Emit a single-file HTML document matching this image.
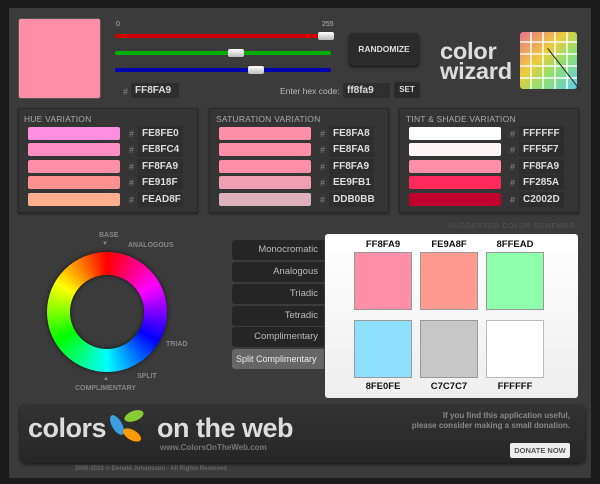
<!DOCTYPE html>
<html><head><style>
*{margin:0;padding:0;box-sizing:border-box}
body{width:600px;height:484px;background:#1c1c1c;font-family:"Liberation Sans",sans-serif;position:relative;overflow:hidden}
.a{position:absolute}
#main{left:9px;top:8px;width:582px;height:470px;background:#3b3b3c}
.hbox{background:#2e2e2f;color:#ddd;font-weight:bold;font-size:10px;line-height:15px;padding-left:4px;border-radius:1px}
.hash{color:#888;font-size:9px}
.panel{background:#353536;border:1px solid #2a2a2a;box-shadow:0 1px 2px #222}
.pt{color:#aaa;font-size:8.5px;letter-spacing:.2px}
.sw{width:92px;height:13px;border-radius:2px;margin-bottom:3.4px}
.track{height:4px;border-radius:2px}
.knob{width:16px;height:8px;background:linear-gradient(#fff,#bbb);border-radius:2px}
.btn{left:232px;width:92px;height:20px;background:#252526;color:#bbb;font-size:9.5px;text-align:right;padding-right:6px;line-height:20px;border-radius:3px 0 0 3px;white-space:nowrap}
.lab{font-size:9.5px;font-weight:bold;color:#111;text-align:center;width:60px}
.sq{width:58px;height:58px;border:1px solid #999}
.wl{color:#888;font-size:7px;font-weight:bold}
.col .r{height:16.4px;position:relative}
.col .r .hash{position:absolute;left:0;top:3px}
.col .r .hbox{position:absolute;left:9px;top:0;width:45px;height:15px}
</style></head><body>
<div id="main" class="a"></div>
<div class="a" style="left:18px;top:18px;width:83px;height:81px;background:#ff8fa9;border-radius:3px;border:1px solid #555"></div>
<div class="a" style="left:116px;top:21px;color:#bbb;font-size:7px">0</div>
<div class="a" style="left:322px;top:21px;color:#bbb;font-size:7px">255</div>
<div class="a track" style="left:115px;top:34px;width:216px;background:#d00000"></div>
<div class="a track" style="left:115px;top:51px;width:216px;background:#00b000"></div>
<div class="a track" style="left:115px;top:68px;width:216px;background:#0000b0"></div>
<div class="a knob" style="left:318px;top:32px"></div>
<div class="a knob" style="left:228px;top:49px"></div>
<div class="a knob" style="left:248px;top:66px"></div>
<div class="a hash" style="left:123px;top:87px">#</div>
<div class="a hbox" style="left:131px;top:83px;width:48px">FF8FA9</div>
<div class="a" style="left:280px;top:86px;color:#bbb;font-size:8.5px">Enter hex code:</div>
<div class="a hbox" style="left:343px;top:83px;width:47px">ff8fa9</div>
<div class="a" style="left:394px;top:82px;width:26px;height:16px;background:#2a2a2b;color:#ddd;font-size:8px;font-weight:bold;text-align:center;line-height:16px;border-radius:2px">SET</div>
<div class="a" style="left:349px;top:33px;width:70px;height:33px;background:#2b2b2c;border-radius:4px;color:#ddd;font-size:8.5px;font-weight:bold;text-align:center;line-height:33px;box-shadow:0 1px 2px #111">RANDOMIZE</div>
<div class="a" style="left:440px;top:41px;color:#ddd;font-size:23px;font-weight:bold;line-height:20px;letter-spacing:-.3px;transform:scaleX(1.03);transform-origin:0 0">color<br>wizard</div>
<div class="a" style="left:520px;top:32px;width:57px;height:57px;border-radius:3px;background:linear-gradient(135deg,rgba(255,120,150,.9),rgba(255,220,60,.9) 40%,rgba(150,240,120,.9) 65%,rgba(100,220,255,.9));"></div>
<div class="a" style="left:520px;top:32px;width:57px;height:57px;background:repeating-linear-gradient(90deg,transparent 0 10px,rgba(255,255,255,.7) 10px 12px),repeating-linear-gradient(0deg,transparent 0 10px,rgba(255,255,255,.7) 10px 12px)"></div>
<div class="a" style="width:52px;height:1px;background:#222;transform:rotate(52deg);transform-origin:0 0;left:548px;top:48px"></div>

<div class="a panel" style="left:18px;top:108px;width:180px;height:105px"></div>
<div class="a panel" style="left:209px;top:108px;width:180px;height:105px"></div>
<div class="a panel" style="left:399px;top:108px;width:180px;height:105px"></div>
<div class="a pt" style="left:24px;top:114px">HUE VARIATION</div>
<div class="a pt" style="left:216px;top:114px">SATURATION VARIATION</div>
<div class="a pt" style="left:406px;top:114px">TINT &amp; SHADE VARIATION</div>

<div class="a" style="left:28px;top:127px">
<div class="sw" style="background:#fe8fe0"></div><div class="sw" style="background:#fe8fc4"></div><div class="sw" style="background:#ff8fa9"></div><div class="sw" style="background:#fe918f"></div><div class="sw" style="background:#fead8f"></div></div>
<div class="a" style="left:219px;top:127px">
<div class="sw" style="background:#fe8fa8"></div><div class="sw" style="background:#fe8fa8"></div><div class="sw" style="background:#ff8fa9"></div><div class="sw" style="background:#ee9fb1"></div><div class="sw" style="background:#ddb0bb"></div></div>
<div class="a" style="left:409px;top:127px">
<div class="sw" style="background:#ffffff"></div><div class="sw" style="background:#fff5f7"></div><div class="sw" style="background:#ff8fa9"></div><div class="sw" style="background:#ff285a"></div><div class="sw" style="background:#c2002d"></div></div>

<div class="a col" style="left:129px;top:126px;width:56px">
<div class="r"><span class="hash">#</span><span class="hbox">FE8FE0</span></div>
<div class="r"><span class="hash">#</span><span class="hbox">FE8FC4</span></div>
<div class="r"><span class="hash">#</span><span class="hbox">FF8FA9</span></div>
<div class="r"><span class="hash">#</span><span class="hbox">FE918F</span></div>
<div class="r"><span class="hash">#</span><span class="hbox">FEAD8F</span></div></div>
<div class="a col" style="left:320px;top:126px;width:56px">
<div class="r"><span class="hash">#</span><span class="hbox">FE8FA8</span></div>
<div class="r"><span class="hash">#</span><span class="hbox">FE8FA8</span></div>
<div class="r"><span class="hash">#</span><span class="hbox">FF8FA9</span></div>
<div class="r"><span class="hash">#</span><span class="hbox">EE9FB1</span></div>
<div class="r"><span class="hash">#</span><span class="hbox">DDB0BB</span></div></div>
<div class="a col" style="left:510px;top:126px;width:56px">
<div class="r"><span class="hash">#</span><span class="hbox">FFFFFF</span></div>
<div class="r"><span class="hash">#</span><span class="hbox">FFF5F7</span></div>
<div class="r"><span class="hash">#</span><span class="hbox">FF8FA9</span></div>
<div class="r"><span class="hash">#</span><span class="hbox">FF285A</span></div>
<div class="r"><span class="hash">#</span><span class="hbox">C2002D</span></div></div>

<div class="a" style="left:448px;top:221px;color:#555;font-size:7.5px;letter-spacing:.5px">SUGGESTED COLOR SCHEMES</div>

<div class="a" style="left:47px;top:252px;width:120px;height:120px;border-radius:50%;background:conic-gradient(from 0deg,#ff0000,#ff00ff 60deg,#0000ff 120deg,#00ffff 180deg,#00ff00 240deg,#ffff00 300deg,#ff0000);box-shadow:0 0 4px #111"></div>
<div class="a" style="left:70px;top:275px;width:74px;height:74px;border-radius:50%;background:#3b3b3c;box-shadow:inset 0 0 4px #111"></div>
<div class="a wl" style="left:99px;top:232px">BASE</div>
<div class="a" style="left:102px;top:241px;color:#888;font-size:6px">▼</div>
<div class="a wl" style="left:128px;top:242px">ANALOGOUS</div>
<div class="a wl" style="left:166px;top:341px">TRIAD</div>
<div class="a wl" style="left:137px;top:373px">SPLIT</div>
<div class="a" style="left:103px;top:376px;color:#888;font-size:6px">▲</div>
<div class="a wl" style="left:75px;top:385px">COMPLIMENTARY</div>

<div class="a btn" style="top:240px">Monocromatic</div>
<div class="a btn" style="top:262px">Analogous</div>
<div class="a btn" style="top:284px">Triadic</div>
<div class="a btn" style="top:306px">Tetradic</div>
<div class="a btn" style="top:327px">Complimentary</div>
<div class="a btn" style="top:349px;background:#666;color:#eee;text-align:left;padding-left:4px;font-size:9px">Split Complimentary</div>

<div class="a" style="left:325px;top:234px;width:253px;height:164px;background:linear-gradient(#fff,#eee);border-radius:3px"></div>
<div class="a lab" style="left:353px;top:239px">FF8FA9</div>
<div class="a lab" style="left:419px;top:239px">FE9A8F</div>
<div class="a lab" style="left:485px;top:239px">8FFEAD</div>
<div class="a sq" style="left:354px;top:252px;background:#ff8fa9"></div>
<div class="a sq" style="left:420px;top:252px;background:#fe9a8f"></div>
<div class="a sq" style="left:486px;top:252px;background:#8ffead"></div>
<div class="a sq" style="left:354px;top:320px;background:#8fe0fe"></div>
<div class="a sq" style="left:420px;top:320px;background:#c7c7c7"></div>
<div class="a sq" style="left:486px;top:320px;background:#fff;border-color:#bbb"></div>
<div class="a lab" style="left:353px;top:381px">8FE0FE</div>
<div class="a lab" style="left:419px;top:381px">C7C7C7</div>
<div class="a lab" style="left:485px;top:381px">FFFFFF</div>

<div class="a" style="left:20px;top:405px;width:565px;height:58px;background:linear-gradient(#333,#262627);border-radius:6px;box-shadow:0 1px 3px #111"></div>
<div class="a" style="left:28px;top:413px;color:#ddd;font-size:27px;font-weight:bold;letter-spacing:-.5px">colors</div>
<div class="a" style="left:112px;top:414px;width:10px;height:22px;background:#3aa0e0;border-radius:50%;transform:rotate(-30deg)"></div>
<div class="a" style="left:124px;top:411px;width:20px;height:10px;background:#8c3;border-radius:50%;transform:rotate(-20deg)"></div>
<div class="a" style="left:122px;top:430px;width:20px;height:10px;background:#f90;border-radius:50%;transform:rotate(30deg)"></div>
<div class="a" style="left:157px;top:413px;color:#ddd;font-size:27px;font-weight:bold;letter-spacing:-.5px">on the web</div>
<div class="a" style="left:160px;top:443px;color:#777;font-size:8px;font-weight:bold">www.ColorsOnTheWeb.com</div>
<div class="a" style="left:380px;top:411px;width:190px;text-align:right;color:#888;font-size:8px;font-weight:bold;line-height:10px">If you find this application useful,<br>please consider making a small donation.</div>
<div class="a" style="left:510px;top:443px;width:60px;height:15px;background:#eee;color:#555;font-size:7.5px;font-weight:bold;text-align:center;line-height:15px;border-radius:2px">DONATE NOW</div>
<div class="a" style="left:75px;top:466px;color:#666;font-size:6px;font-weight:bold">2000-2010 © Donald Johansson - All Rights Reserved</div>
</body></html>
